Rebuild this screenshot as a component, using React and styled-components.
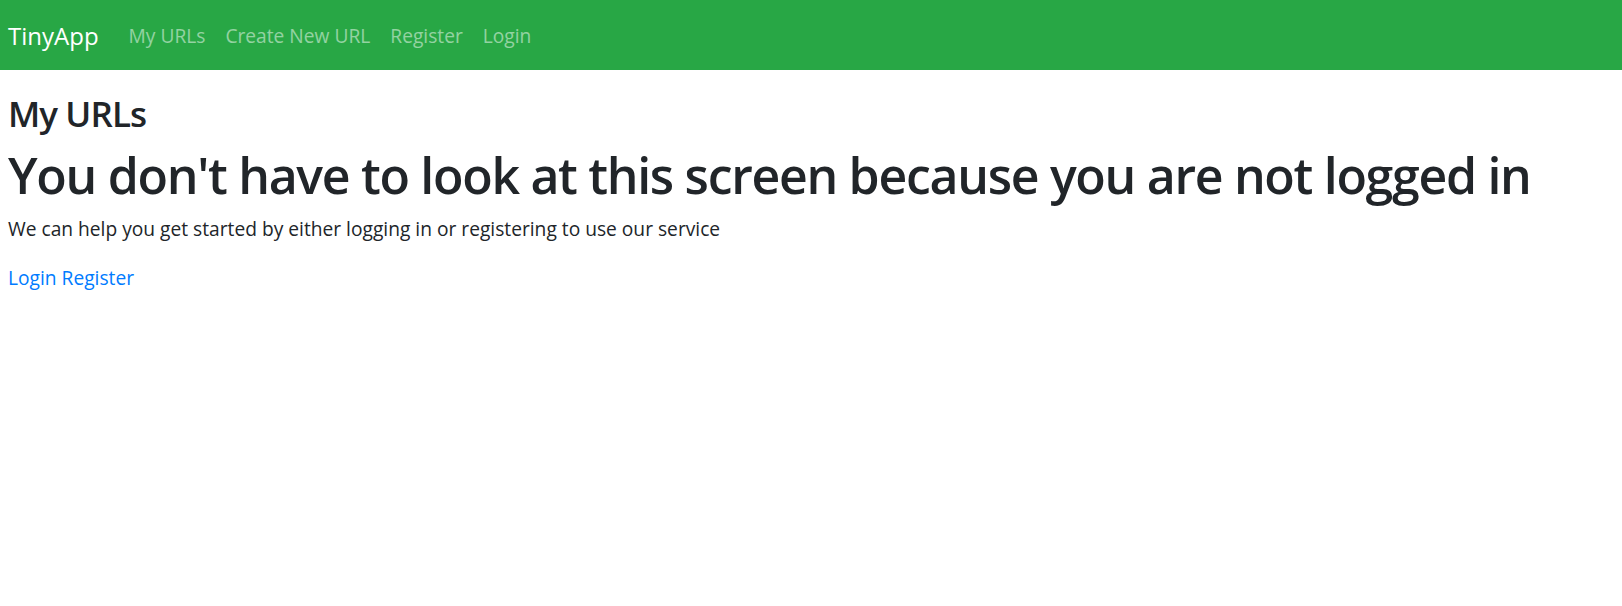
import styled, { createGlobalStyle } from "styled-components";

// Global page reset
const GlobalStyle = createGlobalStyle`
  body {
    margin: 0;
    font-family: "Open Sans", "Noto Sans", sans-serif;
    font-size: 19.2px;
    line-height: 1.5;
    color: #212529;
    background-color: #fff;
  }
`;

const Navbar = styled.nav`
  height: 70px;
  display: flex;
  align-items: center;

  padding: 2px 8px 0;
  box-sizing: border-box;

  background-color: #28a745;
`;

const Brand = styled.a`
  margin-right: 20px;

  font-size: 24px;
  line-height: 1.5;
  color: #fff;
  text-decoration: none;
`;

const NavList = styled.ul`
  display: flex;

  margin: 0;
  padding: 0;

  list-style: none;
`;

const NavLink = styled.a`
  display: block;

  padding: 10px;

  font-size: 19.2px;
  color: rgba(255, 255, 255, 0.5);
  text-decoration: none;
`;

const Main = styled.main`
  padding: 23px 8px 0;
`;

const Title = styled.h3`
  margin: 0 0 10px;

  font-size: 35px;
  font-weight: 600;
  line-height: 1.2;
  letter-spacing: -0.9px;
`;

const Headline = styled.h1`
  margin: 0 0 10px;

  font-size: 50px;
  font-weight: 600;
  line-height: 1.2;
  letter-spacing: -1.3px;
`;

const Text = styled.p`
  margin: 0 0 20px;
`;

const Link = styled.a`
  color: #007bff;
  text-decoration: none;
`;

// Function Main
export default function App() {
  return (
    <>
      <GlobalStyle />
      <Navbar>
        <Brand href="#">TinyApp</Brand>
        <NavList>
          <li>
            <NavLink href="#">My URLs</NavLink>
          </li>
          <li>
            <NavLink href="#">Create New URL</NavLink>
          </li>
          <li>
            <NavLink href="#">Register</NavLink>
          </li>
          <li>
            <NavLink href="#">Login</NavLink>
          </li>
        </NavList>
      </Navbar>
      <Main>
        <Title>My URLs</Title>
        <Headline>You don't have to look at this screen because you are not logged in</Headline>
        <Text>We can help you get started by either logging in or registering to use our service</Text>
        <Text>
          <Link href="#">Login</Link> <Link href="#">Register</Link>
        </Text>
      </Main>
    </>
  );
}
